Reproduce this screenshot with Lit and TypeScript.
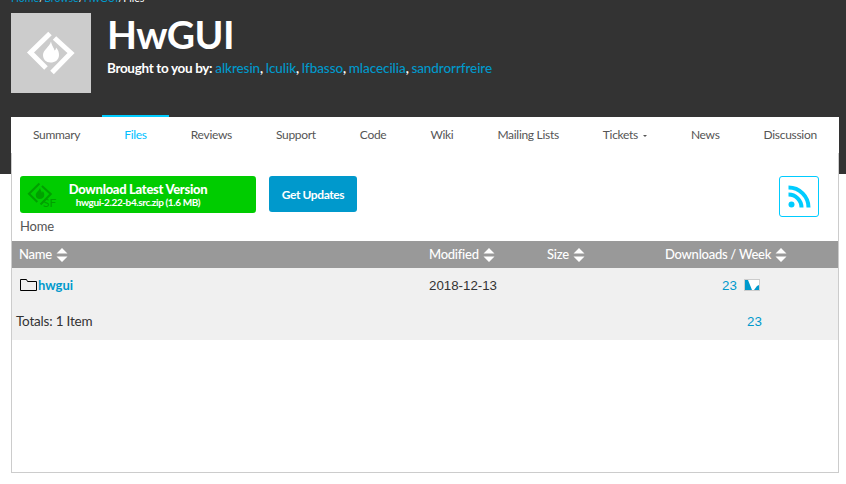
import { LitElement, html, css, svg } from "lit";
import { customElement } from "lit/decorators.js";

const mark = (colour: string, w = 5) => svg`
  <polyline points="39,20.5 19.5,39.5 35,55" fill="none" stroke=${colour} stroke-width=${w}/>
  <polyline points="43.5,25 60,40 41,59.5" fill="none" stroke=${colour} stroke-width=${w}/>
  <path d="M40 28.5c1 5 3 6 3.5 9 1-.5 1.500-1.500 1.500-3 2.500 2.500 3 5 3 7.500 0 5-4 7.500-8.500 7.500s-7.500-3-7.500-7.500c0-5 6.500-8 8-13.500z" fill=${colour}/>`;

const sort = html`<svg class="sort" viewBox="0 0 12 14" width="12" height="14"><path d="M6 0l5.500 5.500H.5zM6 14L.5 8.500h11z" fill="#fff"/></svg>`;

@customElement("app-root")
export class AppRoot extends LitElement {
  static styles = css`
    :host { display: block; width: 846px; height: 484px; overflow: hidden; background: #fff; font-family: Lato, sans-serif; color: #333; font-size: 13px; }
    a { color: #0099cc; text-decoration: none; }
    .hero { height: 174px; background: #333; padding-left: 11px; box-sizing: border-box; color: #fff; }
    .crumbs { height: 13px; overflow: hidden; font-size: 10.5px; line-height: 11px; word-spacing: -2.5px; }
    .crumbs div { margin-top: -7px; }
    .brand { display: flex; gap: 16px; }
    .logo { width: 80px; height: 80px; background: #ccc; display: block; flex: none; }
    h1 { margin: 0; font-size: 39px; letter-spacing: -0.6px; line-height: 42px; font-weight: 700; color: #fff; }
    .by { font-size: 13.5px; font-weight: 700; margin-top: 4px; line-height: 18px; letter-spacing: -0.33px; }
    .by a { font-weight: 500; letter-spacing: -0.08px; }
    .card { margin: -57px 7px 0 11px; height: 356px; box-sizing: border-box; background: #fff; border: 1px solid #ccc; border-top: 0; display: flex; flex-direction: column; }
    nav { display: flex; height: 36px; margin: 0 -1px; background: #fff; }
    nav a { padding: 0 22px; line-height: 36px; color: #555; font-size: 12px; letter-spacing: -0.3px; position: relative; white-space: nowrap; }
    nav a.on { color: #00bfff; }
    nav a.on::before { content: ""; position: absolute; left: 0; right: 0; top: -2px; height: 2px; background: #00ccff; }
    .caret { display: inline-block; width: 0; height: 0; border: 2px solid transparent; border-top-color: #555; border-bottom: 0; margin-left: 5px; vertical-align: 2px; }
    .actions { display: flex; align-items: flex-start; padding: 23px 19px 0 8px; }
    .dl { width: 236px; height: 37px; background: #00cc00; border-radius: 3px; position: relative; display: flex; flex-direction: column; align-items: center; justify-content: center; color: #fff; font-weight: 700; }
    .dl b { font-size: 13px; line-height: 14px; letter-spacing: -0.3px; }
    .dl small { font-size: 10px; line-height: 12px; font-weight: 700; letter-spacing: -0.4px; }
    .dl svg { position: absolute; left: 5px; top: 4px; }
    .dl i { position: absolute; left: 23px; top: 20px; font-size: 12px; font-style: normal; font-weight: 400; color: #00a000; line-height: 14px; }
    .up { margin-left: 13px; width: 88px; height: 36px; background: #0099cc; border-radius: 3px; color: #fff; font-weight: 700; font-size: 12px; letter-spacing: -0.4px; text-align: center; line-height: 37px; }
    .rss { margin-left: auto; width: 40px; height: 41px; box-sizing: border-box; border: 1px solid #00ccff; border-radius: 3px; display: flex; align-items: center; justify-content: center; }
    .home { padding-left: 8px; height: 24px; line-height: 18px; font-size: 13px; letter-spacing: -0.2px; color: #555; }
    .table { display: grid; grid-template-columns: 417px 118px 118px 1fr; }
    .th { background: #999; color: #fff; height: 27px; line-height: 27px; font-size: 13px; font-weight: 500; letter-spacing: -0.25px; white-space: nowrap; display: flex; align-items: center; gap: 4px; }
    .th.first { padding-left: 7px; }
    .td { background: #f0f0f0; height: 36px; box-sizing: border-box; padding-bottom: 2px; display: flex; align-items: center; white-space: nowrap; }
    .name { padding-left: 8px; gap: 1px; font-weight: 700; }
    .date, .num { font-family: "Liberation Sans", sans-serif; font-size: 13.3px; }
    .date { color: #333; }
    .r { padding-left: 57px; gap: 6px; }
    .t { padding-left: 4px; color: #333; font-size: 13.5px; letter-spacing: -0.2px; }
    .rt { padding-left: 82px; }
    .chart { display: block; margin-top: -1px; }
  `;

  render() {
    const tabs = ["Summary", "Files", "Reviews", "Support", "Code", "Wiki", "Mailing Lists", "Tickets", "News", "Discussion"];
    return html`
      <div class="hero">
        <div class="crumbs"><div><a href="#">Home</a> / <a href="#">Browse</a> / <a href="#">HwGUI</a> / Files</div></div>
        <div class="brand">
          <svg class="logo" viewBox="0 0 80 80">${mark("#fff")}</svg>
          <div>
            <h1>HwGUI</h1>
            <div class="by">Brought to you by: <a href="#">alkresin</a>, <a href="#">lculik</a>, <a href="#">lfbasso</a>, <a href="#">mlacecilia</a>, <a href="#">sandrorrfreire</a></div>
          </div>
        </div>
      </div>
      <div class="card">
        <nav>
          ${tabs.map((t) => html`<a href="#" class=${t === "Files" ? "on" : ""}>${t}${t === "Tickets" ? html`<span class="caret"></span>` : ""}</a>`)}
        </nav>
        <div class="actions">
          <a class="dl" href="#">
            <svg viewBox="12 14 56 52" width="30" height="28">${mark("#00a000", 4)}</svg>
            <i>SF</i>
            <b>Download Latest Version</b>
            <small>hwgui-2.22-b4.src.zip (1.6 MB)</small>
          </a>
          <a class="up" href="#">Get Updates</a>
          <a class="rss" href="#">
            <svg viewBox="0 0 24 24" width="24" height="24"><circle cx="4.500" cy="19.500" r="3" fill="#00ccff"/><path d="M1.500 9.500a13 13 0 0 1 13 13M1.500 2.500a20 20 0 0 1 20 20" fill="none" stroke="#00ccff" stroke-width="4"/></svg>
          </a>
        </div>
        <div class="home">Home</div>
        <div class="table">
          <div class="th first">Name ${sort}</div>
          <div class="th">Modified ${sort}</div>
          <div class="th">Size ${sort}</div>
          <div class="th">Downloads / Week ${sort}</div>
          <div class="td name">
            <svg width="17" height="12" viewBox="0 0 17 12"><path d="M.5 11.500V.5h6l1 2h9v9z" fill="none" stroke="#000"/></svg>
            <a href="#">hwgui</a>
          </div>
          <div class="td date">2018-12-13</div>
          <div class="td"></div>
          <div class="td r num">
            <a href="#">23</a>
            <svg class="chart" width="17" height="12" viewBox="0 0 17 12"><rect x="1.500" y=".5" width="15" height="11" fill="#fff" stroke="#ccc"/><path d="M2 1h3l4 10H2zM11 11l3-4 2-1v5z" fill="#0099cc"/></svg>
          </div>
          <div class="td t">Totals: 1 Item</div>
          <div class="td"></div>
          <div class="td"></div>
          <div class="td rt num"><a href="#">23</a></div>
        </div>
      </div>
    `;
  }
}
